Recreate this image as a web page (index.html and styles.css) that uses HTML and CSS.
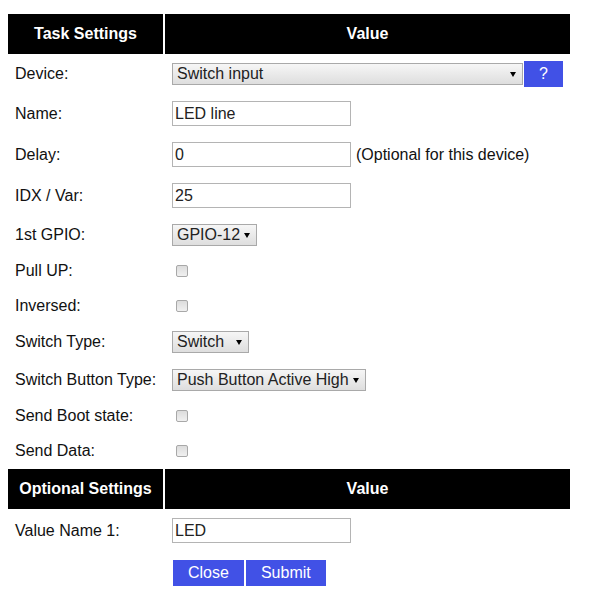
FILE: index.html
```html
<!DOCTYPE html>
<html lang="en">
<head>
<meta charset="utf-8">
<title>Task Settings</title>
<link rel="stylesheet" href="styles.css">
</head>
<body>
<form class="form">
  <div class="th th-left">Task Settings</div><div class="th">Value</div>

  <div class="label">Device:</div>
  <div class="value">
    <span class="select-wrap"><select class="select sel-device"><option>Switch input</option></select></span><a class="button-link help" href="#">?</a>
  </div>

  <div class="label">Name:</div>
  <div class="value"><input class="text" type="text" value="LED line"></div>

  <div class="label">Delay:</div>
  <div class="value gap"><input class="text" type="text" value="0"><span>(Optional for this device)</span></div>

  <div class="label">IDX / Var:</div>
  <div class="value"><input class="text" type="text" value="25"></div>

  <div class="label">1st GPIO:</div>
  <div class="value"><span class="select-wrap"><select class="select sel-gpio"><option>GPIO-12</option></select></span></div>

  <div class="label">Pull UP:</div>
  <div class="value check"><input class="cb" type="checkbox"></div>

  <div class="label">Inversed:</div>
  <div class="value check"><input class="cb" type="checkbox"></div>

  <div class="label">Switch Type:</div>
  <div class="value"><span class="select-wrap"><select class="select sel-switch"><option>Switch</option><option>Dimmer</option></select></span></div>

  <div class="label">Switch Button Type:</div>
  <div class="value"><span class="select-wrap"><select class="select sel-btn"><option>Push Button Active High</option></select></span></div>

  <div class="label">Send Boot state:</div>
  <div class="value check"><input class="cb" type="checkbox"></div>

  <div class="label">Send Data:</div>
  <div class="value check"><input class="cb" type="checkbox"></div>

  <div class="th th-left">Optional Settings</div><div class="th">Value</div>

  <div class="label">Value Name 1:</div>
  <div class="value"><input class="text" type="text" value="LED"></div>

  <div class="label"></div>
  <div class="value"><a class="button-link" href="#">Close</a><button class="button-link" type="submit">Submit</button></div>
</form>
</body>
</html>
```
FILE: styles.css
```css
html, body {
  background: #ffffff;
}

body {
  margin: 14px 0 0 8px;
  font-family: "Liberation Sans", Arial, sans-serif;
  font-size: 16px;
  color: #111111;
}

.form {
  display: grid;
  grid-template-columns: 155px 405px;
  gap: 2px;
  align-items: center;
  margin: 0;
}

.th {
  align-self: stretch;
  background: #000000;
  color: #ffffff;
  font-weight: bold;
  text-align: center;
  line-height: 18px;
  padding: 11px 10px;
  white-space: nowrap;
}

.label {
  padding: 7px;
  line-height: 18px;
  min-height: 18px;
  white-space: nowrap;
}

.value {
  display: flex;
  align-items: center;
  padding: 7px;
  line-height: 18px;
}

.value.gap {
  gap: 5px;
}

.value.check {
  min-height: 18.5px;
}

.text {
  box-sizing: border-box;
  width: 179px;
  height: 25px;
  margin: 0;
  padding: 0 2px;
  border: 1px solid #b4b4b4;
  background: #ffffff;
  font: inherit;
  color: #222222;
  outline: none;
}

.select-wrap {
  position: relative;
  display: block;
}

.select-wrap::after {
  content: "";
  position: absolute;
  right: 7px;
  top: 9px;
  border-left: 3px solid transparent;
  border-right: 3px solid transparent;
  border-top: 5px solid #000000;
  pointer-events: none;
}

.select {
  display: block;
  box-sizing: border-box;
  height: 22px;
  margin: 0;
  padding: 0 15px 0 4px;
  border: 1px solid #a9a9a9;
  border-radius: 0;
  background: linear-gradient(#f6f6f6, #dedede);
  font: inherit;
  line-height: 20px;
  color: #222222;
  -webkit-appearance: none;
  appearance: none;
  outline: none;
}

.sel-device { width: 351px; }
.sel-gpio { width: 85px; }
.sel-switch { width: 77px; }
.sel-btn { width: 194px; }

.cb {
  -webkit-appearance: none;
  appearance: none;
  box-sizing: border-box;
  width: 12px;
  height: 12px;
  margin: 0 0 0 4px;
  border: 1px solid #a8a8a8;
  border-radius: 2px;
  background: linear-gradient(#dcdcdc, #f0f0f0);
}

.button-link {
  display: inline-block;
  box-sizing: border-box;
  height: 28px;
  margin: 0;
  padding: 4px 15px;
  border: 1px solid #ffffff;
  background: #4151e6;
  color: #ffffff;
  font: inherit;
  line-height: 18px;
  text-decoration: none;
  cursor: pointer;
}

.help {
  margin: -3px 0;
}
```
